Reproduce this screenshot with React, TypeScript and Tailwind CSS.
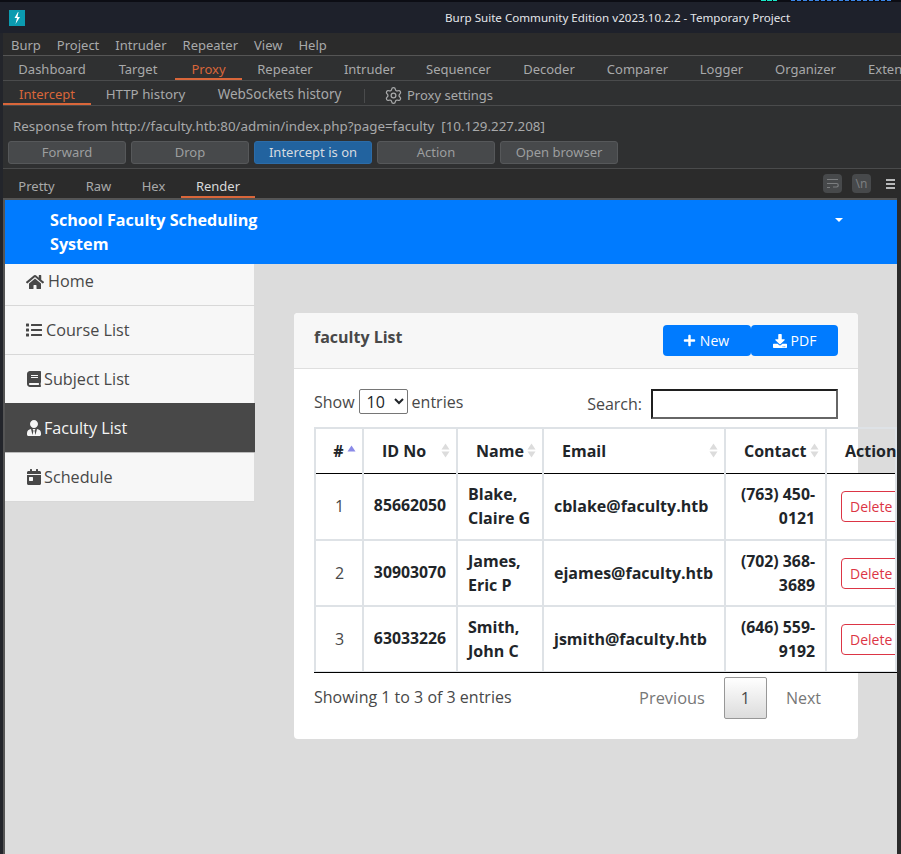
import React from "react";
import { FaHome, FaList, FaBook, FaUserTie, FaCalendarDay, FaPlus, FaDownload } from "react-icons/fa";
import { Settings } from "lucide-react";

const SortIcon = ({ up = false }: { up?: boolean }) => (
  <svg width="9" height="15" viewBox="0 0 9 15" className="shrink-0">
    <path d="M4.5 0.5 L8.5 6.5 H0.5 Z" fill={up ? "#8a8ae8" : "#dcdcdc"} />
    {!up && <path d="M4.5 14.5 L8.5 8.5 H0.5 Z" fill="#dcdcdc" />}
  </svg>
);

const rows = [
  ["1", "85662050", "Blake,", "Claire G", "cblake@faculty.htb", "(763) 450-", "0121"],
  ["2", "30903070", "James,", "Eric P", "ejames@faculty.htb", "(702) 368-", "3689"],
  ["3", "63033226", "Smith,", "John C", "jsmith@faculty.htb", "(646) 559-", "9192"],
];

const nav = [
  { icon: <FaHome className="text-[18px]" />, label: "Home", cls: "h-[42px] gap-[4px] pb-[6px]", tight: false },
  { icon: <FaList className="text-[16px]" />, label: "Course List", cls: "h-[49px] gap-[4px]", tight: false },
  { icon: <FaBook className="text-[16px]" />, label: "Subject List", cls: "h-[49px] gap-[4px]", tight: true },
  { icon: <FaUserTie className="text-[16px]" />, label: "Faculty List", cls: "h-[50px] -mt-px pt-px gap-[4px]", active: true, tight: true },
  { icon: <FaCalendarDay className="text-[16px]" />, label: "Schedule", cls: "h-[49px] gap-[4px]", tight: true },
];

const Tab = ({ label, active, w, cls = "pt-[5px]" }: { label: string; active?: boolean; w: string; cls?: string }) => (
  <div className={`${w} ${cls} h-full flex items-center justify-center shrink-0 border-b-2 ${active ? "border-[#d9663a] text-[#d9663a]" : "border-transparent text-[#a8a9aa]"}`}>
    {label}
  </div>
);

const BurpBtn = ({ label, w, on }: { label: string; w: string; on?: boolean }) => (
  <div className={`${w} h-[23px] pt-px rounded-[3px] flex items-center justify-center border shrink-0 ${on ? "bg-[#22639f] border-[#2c6ca8] text-[#d6dbe0]" : "bg-[#47494b] border-[#56585a] text-[#9c9e9f]"}`}>
    {label}
  </div>
);

const thBase = "border-2 border-[#dee2e6] border-b-black border-b-[1px]";

export default function App() {
  return (
    <div className="w-[901px] h-[854px] overflow-hidden flex flex-col bg-[#23252b] text-[13px] font-['Noto_Sans',sans-serif]">
      <div className="h-[2px] bg-[#0c0d14] shrink-0 relative">
        <svg width="901" height="2" className="absolute left-0 top-0">
          <path d="M761 0.5H777" stroke="#19e6c8" strokeWidth="1" strokeDasharray="5 1" />
          <path d="M791 0.5H893" stroke="#3a86e8" strokeWidth="1" strokeDasharray="4 2" />
        </svg>
      </div>
      <div className="h-[31px] shrink-0 bg-[#1e212b] relative flex items-center pl-[9px]">
        <div className="w-4 h-4 bg-[#0b9bb0] flex items-center justify-center">
          <svg width="10" height="12" viewBox="0 0 10 12"><path d="M6 0 L2.5 6 H5 L3.5 12 L8 5 H5.5 L6.5 0 Z" fill="#fff" /></svg>
        </div>
        <div className="absolute left-[445px] top-[7px] text-[#e4e6ea] text-[11.6px] whitespace-nowrap">Burp Suite Community Edition v2023.10.2.2 - Temporary Project</div>
      </div>
      <div className="flex-1 min-h-0 flex flex-col ml-[3px] bg-[#2f3031]">
        <div className="h-[23px] shrink-0 bg-[#2b2b2b] flex items-center pl-[8px] pt-[4px] gap-[16px] text-[#a8a9aa] border-b border-[#555]">
          <span>Burp</span><span>Project</span><span>Intruder</span><span>Repeater</span><span>View</span><span>Help</span>
        </div>
        <div className="h-[25px] shrink-0 flex items-stretch border-b border-[#4a4b4c] overflow-hidden">
          <Tab label="Dashboard" w="w-[98px]" />
          <Tab label="Target" w="w-[74px]" />
          <Tab label="Proxy" active w="w-[67px]" />
          <Tab label="Repeater" w="w-[86px]" />
          <Tab label="Intruder" w="w-[83px]" />
          <Tab label="Sequencer" w="w-[95px]" />
          <Tab label="Decoder" w="w-[86px]" />
          <Tab label="Comparer" w="w-[91px]" />
          <Tab label="Logger" w="w-[77px]" />
          <Tab label="Organizer" w="w-[91px]" />
          <Tab label="Extensions" w="w-[100px]" />
        </div>
        <div className="h-[25px] shrink-0 flex items-stretch border-b border-[#4a4b4c]">
          <Tab label="Intercept" active w="w-[88px]" />
          <Tab label="HTTP history" w="w-[109px]" cls="pt-[5px] text-[13.3px]" />
          <Tab label="WebSockets history" w="w-[159px]" cls="pt-[5px] text-[13.5px]" />
          <div className="flex items-center text-[#a8a9aa] pl-[5px]">
            <div className="w-px h-[14px] bg-[#4a4b4c] mr-[19px] mt-[6px]" />
            <Settings size={19} className="mr-[4px] mt-[5px]" strokeWidth={1.6} />
            <span className="mt-[5px]">Proxy settings</span>
          </div>
        </div>
        <div className="h-[63px] shrink-0 border-b border-[#4a4b4c] flex flex-col pl-[5px]">
          <div className="pl-[5px] pt-[11px] h-[35px] text-[#a8a9aa] text-[13.35px] whitespace-pre leading-[18px]">Response from http://faculty.htb:80/admin/index.php?page=faculty  [10.129.227.208]</div>
          <div className="flex gap-[5px]">
            <BurpBtn label="Forward" w="w-[118px]" />
            <BurpBtn label="Drop" w="w-[118px]" />
            <BurpBtn label="Intercept is on" w="w-[118px]" on />
            <BurpBtn label="Action" w="w-[118px]" />
            <BurpBtn label="Open browser" w="w-[118px]" />
          </div>
        </div>
        <div className="h-[29px] shrink-0 bg-[#2b2b2b] flex items-stretch relative">
          <Tab label="Pretty" w="w-[67px]" cls="pt-[8px]" />
          <Tab label="Raw" w="w-[57px]" cls="pt-[8px]" />
          <Tab label="Hex" w="w-[53px]" cls="pt-[8px]" />
          <div className="ml-px w-[74px] h-full flex items-center justify-center pt-[8px] border-b-2 border-[#d9663a] text-[#d8d9da]">Render</div>
          <div className="absolute left-[820px] top-[5px] w-[19px] h-[19px] rounded-[4px] bg-[#47494b] flex items-center justify-center">
            <svg width="13" height="11" viewBox="0 0 13 11" fill="none" stroke="#7c7e80" strokeWidth="1.2"><path d="M1 1.5H12M1 5.5H10.5a1.5 1.5 0 0 1 0 3.5H7M1 9.5H4" /></svg>
          </div>
          <div className="absolute left-[849px] top-[5px] w-[19px] h-[19px] rounded-[4px] bg-[#47494b] flex items-center justify-center text-[#7c7e80] text-[12px] leading-none">\n</div>
          <div className="absolute left-[883px] top-[10px] w-[9px] flex flex-col gap-[2px]">
            <div className="h-[2px] bg-[#b8b9ba]" /><div className="h-[2px] bg-[#b8b9ba]" /><div className="h-[2px] bg-[#b8b9ba]" />
          </div>
        </div>
        <div className="flex-1 min-h-0 flex">
          <div className="w-[2px] bg-[#555] shrink-0" />
          <div className="w-[892px] shrink-0 overflow-hidden bg-[#dcdcdc] flex flex-col border-t-2 border-[#555] font-['Open_Sans',sans-serif] text-[16px] text-[#212529]">
            <div className="h-[64px] shrink-0 bg-[#007bff] relative text-white font-bold">
              <div className="absolute left-[45px] top-[8px] w-[220px] leading-[24px] text-[16.15px]">School Faculty Scheduling System</div>
              <div className="absolute left-[830px] top-[18px] w-0 h-0 border-x-[4px] border-x-transparent border-t-[4px] border-t-white" />
            </div>
            <div className="flex-1 min-h-0 flex items-start">
              <div className="w-[250px] shrink-0 flex flex-col">
                {nav.map((n) => (
                  <div key={n.label} className={`flex items-center pl-[21px] font-medium text-[16.2px] ${n.cls} border-b ${n.active ? "bg-[#484848] text-[#f5f5f5] border-[#bbb]" : "bg-[#f7f7f7] text-[#484848] border-[#d8d8d8] border-r border-r-[#dcdcdc]"}`}>
                    {n.icon}
                    <span className={n.tight ? "-ml-[2px]" : ""}>{n.label}</span>
                  </div>
                ))}
              </div>
              <div className="ml-[39px] mt-[49px] w-[564px] h-[426px] shrink-0 bg-white rounded-[4px] flex flex-col">
                <div className="h-[56px] shrink-0 bg-[#f7f7f7] border-b border-[#dfdfdf] rounded-t-[4px] flex items-start justify-between pl-5 pr-5 pt-[12px]">
                  <b className="text-[#484848] font-bold leading-[24px]">faculty List</b>
                  <div className="flex text-white text-[14px]">
                    <div className="w-[88px] h-[31px] pr-[2px] bg-[#007bff] rounded-[4px] flex items-center justify-center gap-[4px]"><FaPlus className="text-[13px]" />New</div>
                    <div className="w-[87px] h-[31px] bg-[#007bff] rounded-[4px] flex items-center justify-center gap-[4px]"><FaDownload className="text-[14px]" />PDF</div>
                  </div>
                </div>
                <div className="pl-5 pt-[20px] pr-5 flex justify-between h-[58px] shrink-0">
                  <div className="flex items-start gap-[3px] text-[#484848] leading-[24px] pt-0">
                    <span className="mt-px">Show</span>
                    <select className="ml-px w-[49px] h-[25px] border border-[#767676] rounded-[2px] text-[#212529] bg-white text-[16px] pl-[3px]" defaultValue="10"><option>10</option></select>
                    <span className="mt-px ml-[1px]">entries</span>
                  </div>
                  <div className="flex items-start gap-[9px] text-[#484848] leading-[24px] pt-[3px]">
                    <span>Search:</span>
                    <div className="w-[187px] h-[30px] -mt-[3px] border-2 border-t-[#1f1f1f] border-l-[#1f1f1f] border-r-[#666] border-b-[#666] bg-white" />
                  </div>
                </div>
                <div className="ml-5 w-[583px] shrink-0">
                  <table className="table-fixed border-collapse w-[583px] text-center">
                    <thead>
                      <tr className="h-[45px]">
                        <th className={`w-[48px] ${thBase} font-bold pl-[11px]`}><div className="flex justify-center items-center gap-[3px]"><span>#</span><span className="mt-[3px]"><SortIcon up /></span></div></th>
                        <th className={`w-[94px] ${thBase}`}><div className="flex justify-between items-center pl-[18px] pr-[6px]"><span>ID No</span><SortIcon /></div></th>
                        <th className={`w-[86px] ${thBase}`}><div className="flex justify-between items-center pl-[18px] pr-[6px]"><span>Name</span><SortIcon /></div></th>
                        <th className={`w-[182px] ${thBase}`}><div className="flex justify-between items-center pl-[18px] pr-[6px]"><span>Email</span><SortIcon /></div></th>
                        <th className={`w-[101px] ${thBase}`}><div className="flex justify-between items-center pl-[18px] pr-[6px]"><span>Contact</span><SortIcon /></div></th>
                        <th className={thBase}><div className="pl-[18px] text-left whitespace-nowrap">Action</div></th>
                      </tr>
                    </thead>
                    <tbody>
                      {rows.map((r, i) => {
                        const b = `border-2 border-[#dee2e6] ${i === 0 ? "border-t-0" : ""}`;
                        return (
                          <tr key={r[0]} className={i === 0 ? "h-[67px] bg-white" : "h-[66px] bg-white"}>
                            <td className={`${b} text-[#484848] pl-px`}>{r[0]}</td>
                            <td className={`${b} font-bold text-[#212529] text-[15.8px]`}>{r[1]}</td>
                            <td className={`${b} font-bold text-left pl-[10px] leading-[24px]`}>{r[2]}<br />{r[3]}</td>
                            <td className={`${b} font-bold text-left pl-[10px] whitespace-nowrap`}>{r[4]}</td>
                            <td className={`${b} font-bold text-right pr-[10px] leading-[24px] text-[15.8px]`}>{r[5]}<br />{r[6]}</td>
                            <td className={`${b} text-left pl-[14px]`}>
                              <div className="w-[70px] h-[31px] border border-[#dc3545] rounded-[4px] text-[#dc3545] text-[14px] flex items-center pl-[8px]">Delete</div>
                            </td>
                          </tr>
                        );
                      })}
                    </tbody>
                  </table>
                </div>
                <div className="ml-5 h-0 border-t border-black w-[583px] shrink-0 -mt-px" />
                <div className="pl-5 pr-5 pt-[4px] flex justify-between text-[#484848]">
                  <span className="mt-[8px]">Showing 1 to 3 of 3 entries</span>
                  <div className="flex items-center text-[#777]">
                    <span className="pl-[17px] pr-[19px] text-[16.4px]">Previous</span>
                    <span className="w-[43px] h-[42px] flex items-center justify-center border border-[#979797] rounded-[2px] bg-gradient-to-b from-white to-[#dcdcdc] text-[#484848]">1</span>
                    <span className="pl-[19px] pr-[17px]">Next</span>
                  </div>
                </div>
              </div>
            </div>
          </div>
          <div className="flex-1 bg-[#2b2b2b]" />
        </div>
      </div>
    </div>
  );
}
